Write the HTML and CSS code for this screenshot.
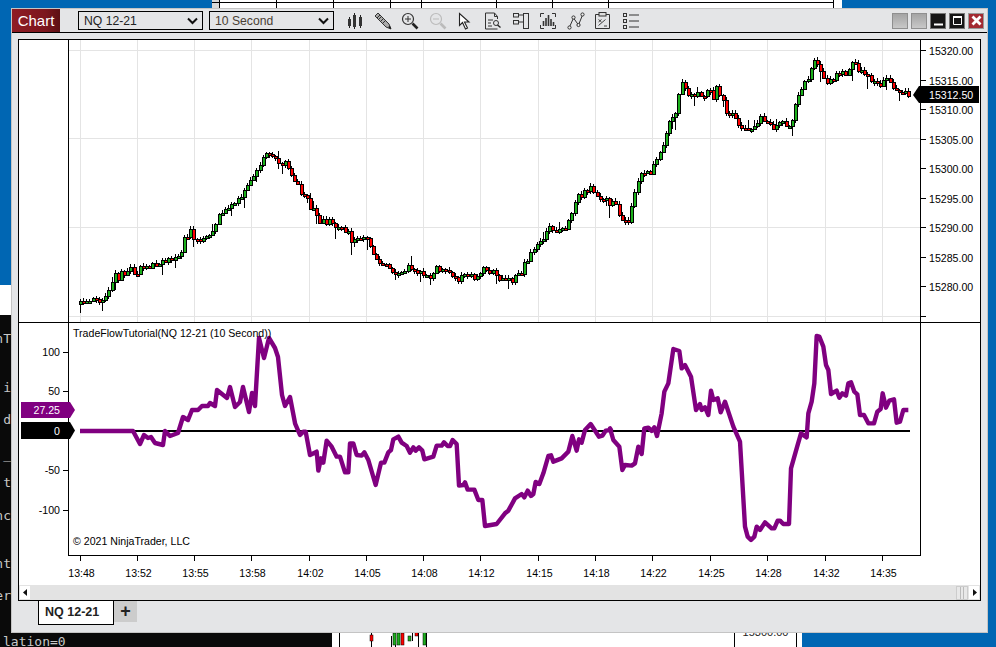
FILE: index.html
```html
<!DOCTYPE html>
<html lang="en">
<head>
  <meta charset="UTF-8">
  <title>Chart - NQ 12-21</title>
  <link rel="stylesheet" href="styles.css">
</head>
<body>
  <!-- windows behind the chart -->
  <div class="bg-white-left"></div>
  <div class="console">
    <span class="con-line l1">nT</span>
    <span class="con-line l2">i</span>
    <span class="con-line l3">d</span>
    <span class="con-line l4">_</span>
    <span class="con-line l5">t</span>
    <span class="con-line l6">nc</span>
    <span class="con-line l7">nt</span>
    <span class="con-line l8">er</span>
  </div>
  <div class="console-bottom">lation=0</div>
  <svg class="win-top" width="630" height="9" viewBox="0 0 630 9">
    <rect width="630" height="9" fill="#fff"/>
    <rect width="7" height="9" fill="#d8d8d8"/>
    <path d="M7.5 0V9M64.5 0V9M121.5 0V9M178.5 0V9M209.5 0V9M284.5 0V9M340.5 0V9M396.5 0V9M621.5 0V9M0 2.5H622" stroke="#000" fill="none"/>
  </svg>
  <div class="win-bottom">
    <div class="win-bottom-main">
      <svg width="120" height="15" viewBox="0 0 120 15">
        <path d="M31.5 0V15M51.5 4V15M55.5 0V15M62.5 0V12M72.5 0V9M78.5 0V15M86.5 0V15" stroke="#000" fill="none"/>
        <rect x="30" y="3" width="3" height="6" fill="#f00" stroke="#000" stroke-width=".5"/>
        <rect x="53" y="1" width="3" height="12" fill="#1fae1f" stroke="#000" stroke-width=".5"/>
        <rect x="57" y="1" width="3" height="12" fill="#1fae1f" stroke="#000" stroke-width=".5"/>
        <rect x="61" y="1" width="3" height="12" fill="#f00" stroke="#000" stroke-width=".5"/>
        <rect x="68" y="4" width="3" height="5" fill="#1fae1f" stroke="#000" stroke-width=".5"/>
        <rect x="75" y="0" width="3" height="4" fill="#f00" stroke="#000" stroke-width=".5"/>
        <rect x="83" y="0" width="3" height="13" fill="#1fae1f" stroke="#000" stroke-width=".5"/>
      </svg>
    </div>
    <div class="win-bottom-axis"><span>15300.00</span></div>
  </div>

  <div class="window">
    <div class="titlebar">
      <div class="chart-btn">Chart</div>
      <div class="combo combo-instrument">
        <span>NQ 12-21</span>
        <svg width="11" height="8" viewBox="0 0 11 8"><path d="M1 1.5l4.5 4.5 4.5-4.5" fill="none" stroke="#111" stroke-width="2"/></svg>
      </div>
      <div class="combo combo-period">
        <span>10 Second</span>
        <svg width="11" height="8" viewBox="0 0 11 8"><path d="M1 1.5l4.5 4.5 4.5-4.5" fill="none" stroke="#111" stroke-width="2"/></svg>
      </div>

      <div class="tools">
        <!-- bars -->
        <svg class="tool" viewBox="0 0 18 18"><path d="M3.5 5V16M8.5 1V17M14.5 3V16" stroke="#222" fill="none"/><rect x="2" y="7" width="3" height="7" fill="#333"/><rect x="7" y="3" width="3" height="12" fill="#333"/><rect x="13" y="5" width="3" height="9" fill="#333"/></svg>
        <!-- pencil -->
        <svg class="tool" viewBox="0 0 18 18"><path d="M1 4l3-3 11 11 2 5-5-2z" fill="#aaa" stroke="#333"/><path d="M3 6l3-3M5 7l3-3M7 9l3-3M9 11l3-3" stroke="#333" fill="none"/><path d="M14 15l3 2-1-3z" fill="#111"/></svg>
        <!-- zoom in -->
        <svg class="tool" viewBox="0 0 18 18"><circle cx="7" cy="7" r="5.5" fill="none" stroke="#333" stroke-width="1.2"/><path d="M4 7h6M7 4v6" stroke="#333" fill="none"/><path d="M11.5 11.5l5 5" stroke="#222" stroke-width="2.6" fill="none"/></svg>
        <!-- zoom out -->
        <svg class="tool" viewBox="0 0 18 18"><circle cx="7" cy="7" r="5.5" fill="none" stroke="#bbb" stroke-width="1.2"/><path d="M4 7h6" stroke="#bbb" fill="none"/><path d="M11.5 11.5l5 5" stroke="#bbb" stroke-width="2.6" fill="none"/></svg>
        <!-- cursor -->
        <svg class="tool" viewBox="0 0 18 18"><path d="M3.5 1.5v12l3-3 3 6.5 2-1-3-6h4.5z" fill="#fff" stroke="#222" stroke-width="1.1"/></svg>
        <!-- document search -->
        <svg class="tool" viewBox="0 0 18 18"><path d="M13.5 7V4.5l-3-3.5h-9v16h12" fill="none" stroke="#333"/><path d="M10.5 1v3.5h3M4 8h5M4 11h3M4 14h4" stroke="#333" fill="none"/><circle cx="12" cy="11" r="2.5" fill="none" stroke="#333"/><path d="M13.5 13l3 2.5" stroke="#222" stroke-width="1.4" fill="none"/></svg>
        <!-- panels -->
        <svg class="tool" viewBox="0 0 18 18"><rect x="11.5" y="1.5" width="5" height="15" fill="none" stroke="#333"/><rect x="1.5" y="1.5" width="5" height="3.5" fill="none" stroke="#333"/><rect x="1.5" y="8.5" width="5" height="3.5" fill="none" stroke="#333"/><path d="M6.5 3h5M6.5 10h5" stroke="#333" fill="none"/></svg>
        <!-- data box -->
        <svg class="tool" viewBox="0 0 18 18"><path d="M5 1.5H1.500V5M13 1.500h3.500V5M1.500 13v3.500H5M16.500 13v3.500H13" fill="none" stroke="#333"/><path d="M4.500 9v5M7 6v8M9.500 3v11M12 7v7M14.500 10v4" stroke="#333" stroke-width="1.6" fill="none"/></svg>
        <!-- drawing line -->
        <svg class="tool" viewBox="0 0 18 18"><path d="M2.500 15L6.500 6l5 7 4-10" fill="none" stroke="#333"/><circle cx="2.500" cy="15.500" r="1.600" fill="#eee" stroke="#333"/><circle cx="6.500" cy="5.500" r="1.600" fill="#eee" stroke="#333"/><circle cx="11.500" cy="13" r="1.600" fill="#eee" stroke="#333"/><circle cx="15.500" cy="2.500" r="1.600" fill="#eee" stroke="#333"/></svg>
        <!-- strategy sheet -->
        <svg class="tool" viewBox="0 0 18 18"><path d="M5 2.500H1.500v14h14v-14H12" fill="none" stroke="#333"/><rect x="5" y=".5" width="7" height="3.500" fill="#ddd" stroke="#333"/><path d="M4.500 7.500l3 2.500M7.500 7.500l-3 2.500M4.500 13.500l7-6M10 14h3" stroke="#444" fill="none"/></svg>
        <!-- list -->
        <svg class="tool" viewBox="0 0 18 18"><rect x="1.500" y="1.500" width="3" height="3" fill="none" stroke="#333"/><rect x="1.500" y="7.500" width="3" height="3" fill="none" stroke="#333"/><rect x="1.500" y="13.500" width="3" height="3" fill="none" stroke="#333"/><path d="M7 3h10M7 9h10M7 15h10" stroke="#333" fill="none"/></svg>
      </div>

      <div class="win-btns">
        <div class="win-btn grey"></div>
        <div class="win-btn grey"></div>
        <div class="win-btn dark"><svg width="15" height="15" viewBox="0 0 15 15"><path d="M3 11.500h9" stroke="#fff" stroke-width="2"/></svg></div>
        <div class="win-btn dark"><svg width="15" height="15" viewBox="0 0 15 15"><path d="M3.500 3.500h8v8h-8z" fill="none" stroke="#fff"/><path d="M3 4h9" stroke="#fff" stroke-width="2"/></svg></div>
        <div class="win-btn close"><svg width="15" height="15" viewBox="0 0 15 15"><path d="M3.500 3.500l8 8M11.500 3.500l-8 8" stroke="#fff" stroke-width="2.800"/></svg></div>
      </div>
    </div>

    <div class="frame">
      <svg id="chart" class="chart" width="961" height="545" viewBox="19 40 961 545"></svg>
      <div class="scrollbar">
        <div class="scroll-btn"><svg width="5" height="7" viewBox="0 0 5 7"><path d="M4 0v7L0 3.500z" fill="#111"/></svg></div>
        <div class="scroll-thumb"></div>
        <div class="scroll-btn"><svg width="5" height="7" viewBox="0 0 5 7"><path d="M1 0v7l4-3.500z" fill="#111"/></svg></div>
      </div>
    </div>

    <div class="tabs">
      <div class="tab">NQ 12-21</div>
      <div class="tab-add">+</div>
    </div>
  </div>

  <script src="chart.js"></script>
</body>
</html>
```

FILE: styles.css
```css
body {
  margin: 0;
  width: 996px;
  height: 647px;
  overflow: hidden;
  position: relative;
  background: #0066b3;
  font-family: "Liberation Sans", Arial, sans-serif;
}
.bg-white-left {
  position: absolute;
  left: 0;
  top: 285px;
  width: 11px;
  height: 30px;
  background: #fff;
}
.console {
  position: absolute;
  left: 0;
  top: 315px;
  width: 11px;
  height: 317px;
  background: #0a0a0a;
  overflow: hidden;
}
.con-line {
  position: absolute;
  right: 0;
  color: #c8c8c8;
  font: 13px/16px "DejaVu Sans Mono", monospace;
}
.l1 { top: 16px; }
.l2 { top: 65px; }
.l3 { top: 97px; }
.l4 { top: 132px; }
.l5 { top: 160px; }
.l6 { top: 193px; }
.l7 { top: 241px; }
.l8 { top: 273px; }
.console-bottom {
  position: absolute;
  left: 0;
  top: 632px;
  width: 329px;
  height: 15px;
  padding-left: 3px;
  background: #0a0a0a;
  color: #c8c8c8;
  font: 13px/20px "DejaVu Sans Mono", monospace;
  overflow: hidden;
}
.win-top {
  position: absolute;
  left: 212px;
  top: 0;
}
.win-bottom {
  position: absolute;
  left: 332px;
  top: 632px;
  width: 470px;
  height: 15px;
  display: flex;
  background: #fff;
  padding-left: 7px;
  box-sizing: border-box;
}
.win-bottom-main {
  width: 395px;
  border-left: 1px solid #000;
  box-sizing: border-box;
}
.win-bottom-axis {
  width: 61px;
  border-left: 1px solid #000;
  border-right: 1px solid #000;
  overflow: hidden;
  text-align: center;
  font-size: 11px;
  line-height: 1px;
  color: #222;
}

/* main window */
.window {
  position: absolute;
  left: 11px;
  top: 8px;
  width: 975px;
  height: 623px;
  background: #e4e5e7;
  border: 1px solid #c4c4c4;
}
.titlebar {
  display: flex;
  align-items: center;
  height: 23px;
  border-bottom: 1px solid #000;
}
.chart-btn {
  width: 48px;
  height: 23px;
  background: linear-gradient(to right, #8f1c24, #7c161d 70%, #5c1014);
  color: #fff;
  font-size: 15px;
  line-height: 23px;
  text-align: center;
}
.combo {
  display: flex;
  align-items: center;
  justify-content: space-between;
  box-sizing: border-box;
  width: 125px;
  height: 19px;
  padding: 0 4px 0 5px;
  border: 1px solid #000;
  font-size: 12.2px;
  color: #222;
}
.combo-instrument { margin-left: 18px; }
.combo-period { margin-left: 6px; color: #4a4034; }
.tools {
  display: flex;
  gap: 9.6px;
  margin-left: 12px;
}
.tool {
  width: 18px;
  height: 18px;
}
.win-btns {
  display: flex;
  gap: 3px;
  margin-left: auto;
  margin-right: 3px;
}
.win-btn {
  box-sizing: border-box;
  width: 16px;
  height: 16px;
  border: 1px solid #8f8f8f;
}
.win-btn.grey { background: linear-gradient(#a4a4a4, #c8c8c8); }
.win-btn.dark { background: #161616; border-color: #777; }
.win-btn.close { background: #a32a32; border-color: #999; }
.win-btn svg { display: block; margin: -0.5px; }

.frame {
  margin: 6px 0 0 6px;
  width: 961px;
  border: 1px solid #000;
  background: #fff;
}
.chart {
  display: block;
  font-size: 10.6px;
  fill: #000;
}
.scrollbar {
  display: flex;
  align-items: center;
  height: 15px;
  padding: 0 1px;
  background: #e3e3e3;
}
.scroll-btn {
  display: flex;
  align-items: center;
  justify-content: center;
  width: 10px;
  height: 13px;
  background: #fff;
}
.scroll-thumb {
  box-sizing: border-box;
  width: 12px;
  height: 14px;
  margin-left: auto;
  margin-right: 1px;
  border: 1px solid #ccc;
  background: linear-gradient(to right, #e8e8e8 3px, #bbb 3px, #bbb 4px, #e8e8e8 4px, #e8e8e8 6px, #bbb 6px, #bbb 7px, #e8e8e8 7px);
}
.tabs {
  display: flex;
  align-items: flex-start;
  margin-left: 26px;
}
.tab {
  box-sizing: border-box;
  width: 76px;
  height: 24px;
  padding-left: 6px;
  background: #fff;
  border: 1px solid #000;
  border-top: 0;
  font-size: 12.5px;
  font-weight: bold;
  line-height: 22px;
  color: #222;
}
.tab-add {
  width: 23px;
  height: 21px;
  background: #ccc;
  color: #222;
  font-size: 18px;
  font-weight: bold;
  line-height: 20px;
  text-align: center;
}
```

FILE: chart.js
```js
// page pixel coords, viewBox of the svg uses the same numbers
const svg = document.getElementById('chart');
const NS = 'http://www.w3.org/2000/svg';

function add(tag, attrs, text) {
  const el = document.createElementNS(NS, tag);
  for (const k in attrs) el.setAttribute(k, attrs[k]);
  if (text !== undefined) el.textContent = text;
  svg.appendChild(el);
  return el;
}

function line(x1, y1, x2, y2, color, w) {
  add('line', { x1, y1, x2, y2, stroke: color || '#000', 'stroke-width': w || 1, 'shape-rendering': 'crispEdges' });
}

const times = ['13:48','13:52','13:55','13:58','14:02','14:05','14:08','14:12','14:15','14:18','14:22','14:25','14:28','14:32','14:35'];
const timeX = [80,137,194,251,309,366,423,480,538,595,652,710,767,825,882];
const prices = ['15320.00','15315.00','15310.00','15305.00','15300.00','15295.00','15290.00','15285.00','15280.00'];
const priceY = [50.5,80.5,109.5,139.5,168.5,198.5,227.5,257.5,286.5,316.5];

// grid
timeX.forEach(x => line(x + .5, 40, x + .5, 322, '#e4e4e4'));
[50.5, 138.5, 227.5, 316.5].forEach(y => line(68, y, 920, y, '#e4e4e4'));

// candles, waypoints read off the reference (x, y of price)
const path = [[80,304],[88,303],[92,300],[95,297],[98,301],[103,301],[108,295],[112,287],[115,274],[120,280],[123,273],[128,272],[133,269],[138,273],[143,265],[150,265],[160,263],[170,261],[175,259],[182,252],[185,238],[192,230],[195,237],[198,242],[203,240],[210,238],[217,223],[221,210],[227,209],[232,202],[237,202],[242,195],[247,185],[252,177],[258,170],[262,160],[267,155],[277,155],[280,164],[287,164],[290,172],[293,178],[298,183],[302,192],[308,198],[310,208],[317,210],[320,220],[327,223],[330,220],
  [332,220],[340,227],[350,232],[353,242],[360,238],[367,233],[372,250],[378,260],[385,265],[392,272],[402,273],[410,267],[420,273],[430,276],[438,267],[453,272],[458,282],[467,273],[477,278],[485,268],[493,272],[500,278],[513,280],[523,272],[528,260],[533,248],[543,240],[550,223],[557,232],[567,227],[572,213],[578,198],[587,190],[592,185],[597,195],[607,201],[617,205],[622,218],[630,220],[635,198],[638,180],[645,173],[652,172],
  [665,143],[670,125],[678,108],[682,83],[690,92],[697,93],[703,97],[710,88],[715,100],[718,85],[725,102],[728,113],[735,117],[742,128],[748,132],[757,125],[760,118],[767,118],[773,128],[780,123],[788,123],[792,127],[797,102],[800,92],[807,82],[813,67],[818,60],[823,72],[830,83],[837,75],[847,73],[852,62],[860,70],[868,75],[877,82],[882,85],[890,77],[895,92],[902,93],[909,94]];

function priceAt(x) {
  for (let i = 1; i < path.length; i++) {
    if (x <= path[i][0]) {
      const a = path[i - 1], b = path[i];
      return a[1] + (b[1] - a[1]) * (x - a[0]) / (b[0] - a[0]);
    }
  }
  return path[path.length - 1][1];
}

let seed = 1221;
function rnd() {
  seed = (seed * 16807) % 2147483647;
  return seed / 2147483647;
}

let open = priceAt(80);
for (let x = 80; x < 909; x += 3.15) {
  const close = priceAt(x + 1.5) + (rnd() - .5) * 6.5;
  const rx = Math.round(x);
  const top = Math.round(Math.min(open, close));
  let bottom = Math.round(Math.max(open, close));
  if (bottom - top < 2) bottom = top + 2;
  let wickUp = top - 1 - Math.floor(rnd() * 3);
  let wickDown = bottom + 1 + Math.floor(rnd() * 3);
  if (rnd() < .14) wickDown += 4 + Math.floor(rnd() * 7);
  if (rnd() < .06) wickUp -= 3 + Math.floor(rnd() * 4);
  line(rx + .5, wickUp, rx + .5, wickDown);
  add('rect', {
    x: rx - .5, y: top + .5, width: 3, height: bottom - top,
    fill: close < open ? '#1cb01c' : '#f00',
    stroke: '#000', 'shape-rendering': 'crispEdges'
  });
  open = close;
}

// frame lines
line(68.5, 40, 68.5, 555);
line(920.5, 40, 920.5, 556);
line(19, 322.5, 980, 322.5);
line(68, 555.5, 921, 555.5);

// price axis
priceY.forEach((y, i) => {
  line(920, y, 926, y);
  if (prices[i]) add('text', { x: 929, y: y + 4 }, prices[i]);
});
add('polygon', { points: '913,95 919,86 979,86 979,103 919,103', fill: '#000' });
add('text', { x: 929, y: 99, fill: '#fff' }, '15312.50');

// indicator axis
[[100,352],[50,391],[0,431],[-50,470],[-100,510]].forEach(t => {
  line(63, t[1] + .5, 68, t[1] + .5);
  if (t[0] !== 0) add('text', { x: 60, y: t[1] + 4, 'text-anchor': 'end' }, t[0]);
});

// time axis
timeX.forEach((x, i) => {
  line(x + .5, 556, x + .5, 561);
  add('text', { x: x + 1.5, y: 577, 'text-anchor': 'middle' }, times[i]);
});

// zero line + flow line
line(80, 431, 910, 431, '#000', 2);
const flow = [[80,431],[133,431],[140,444],[144,435],[148,438],[151,437],[155,443],[163,445],[165,431],[170,436],[178,433],[183,417],[188,420],[192,410],[198,410],[202,406],[208,406],[210,403],[215,406],[217,390],[227,398],[230,387],[235,407],[240,402],[243,387],[249,412],[252,393],[255,406],[259,338],[264,358],[269,338],[275,348],[278,357],[282,395],[285,406],[290,397],[295,423]];
[[0,10],[15,45],[25,35],[32,35],[45,105],[65,95],[70,152],[78,115],[85,128],[95,62],[110,80],[125,110],[135,110],[150,157],[160,157],[165,70],[175,70],[185,105],[200,107],[208,97],[220,120],[242,195],[258,128],[268,128],[280,97],[288,90],[295,58],[310,50],[320,68],[335,78],[345,98],[355,82],[362,92],[372,82],[382,92],[388,118],[415,110],[425,77],[440,77],[447,67],[458,78],[465,78],[473,60],[485,72],[492,197],[505,195],[510,187],[518,209],[538,209],[550,240],[562,240],[570,318],[605,312],[630,280],[640,272],[660,235],[680,222],[688,232],[698,212],[708,228],[715,222],[722,186],[733,192],[745,160],[760,108],[768,106],[775,125],[800,115],[820,95],[832,48],[845,92],[852,58],[860,68],[870,30],[887,12],[912,50],[922,47],[932,32],[948,30]]
  .forEach(p => flow.push([295 + p[0] / 3, 420 + p[1] / 3]));
[[0,295],[10,330],[28,350],[37,420],[45,405],[65,407],[75,400],[85,350],[95,372],[103,295],[115,293],[125,303],[133,292],[141,318],[155,250],[163,185],[175,160],[190,57],[208,63],[215,115],[225,105],[243,140],[258,240],[270,222],[275,240],[285,232],[295,255],[303,182],[310,210],[323,205],[332,247],[345,215],[370,290],[390,335],[405,590],[413,620],[423,630],[433,620],[440,590],[450,600],[465,577],[485,595],[493,595],[503,572],[510,572],[520,582],[537,582],[543,415],[560,355],[573,310],[590,322],[595,250],[605,215],[613,160],[620,18],[628,20],[640,50],[648,105],[655,120],[663,192],[680,182],[688,203],[697,190],[708,197],[715,160],[723,157],[733,185],[742,193],[750,255],[762,255],[775,280],[792,280],[802,245],[812,237],[818,190],[828,233],[838,212],[852,208],[860,278],[870,275],[880,240],[895,240]]
  .forEach(p => flow.push([610 + p[0] / 3, 330 + p[1] / 3]));
add('polyline', {
  points: flow.map(p => p.join(',')).join(' '),
  fill: 'none', stroke: '#800080', 'stroke-width': 4.4, 'stroke-linejoin': 'round'
});

// value tags
add('polygon', { points: '21,402 70,402 75,410 70,418 21,418', fill: '#800080' });
add('text', { x: 60, y: 414, 'text-anchor': 'end', fill: '#fff' }, '27.25');
add('polygon', { points: '21,422 70,422 75,430.5 70,439 21,439', fill: '#000' });
add('text', { x: 60, y: 435, 'text-anchor': 'end', fill: '#fff' }, '0');

add('text', { x: 73, y: 337 }, 'TradeFlowTutorial(NQ 12-21 (10 Second))');
add('text', { x: 73, y: 545 }, '© 2021 NinjaTrader, LLC');
```
